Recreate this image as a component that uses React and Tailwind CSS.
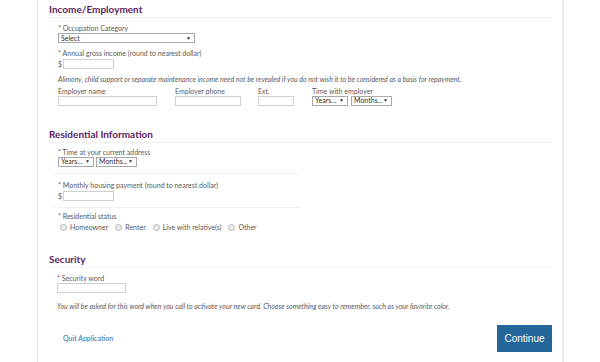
import React from "react"

const Label = ({ children, className = "" }) => (
  <p className={`text-[7px] leading-[9px] text-[#5a5a5a] ${className}`}>{children}</p>
)

const Box = ({ className = "" }) => (
  <div className={`h-[10px] border border-[#cfcfcf] bg-white ${className}`} />
)

const Dropdown = ({ text, className = "" }) => (
  <div className={`flex h-[10px] items-center justify-between border border-[#a9a9a9] bg-white pl-[2px] pr-[3px] text-[7px] leading-none text-[#333] ${className}`}>
    <span>{text}</span>
    <span className="text-[5px]">▼</span>
  </div>
)

const Radio = ({ text }) => (
  <div className="flex items-center gap-[3px]">
    <span className="h-[7px] w-[7px] rounded-full border border-[#b8b8b8] bg-[#ececec]" />
    <span className="text-[7px] text-[#5a5a5a]">{text}</span>
  </div>
)

const Heading = ({ children }) => (
  <div className="border-b border-[#f1f1f1] pb-[2px]">
    <h2 className="text-[10px] font-bold leading-[12px] text-[#5a1e5f]">{children}</h2>
  </div>
)

export default function App() {
  return (
    <div className="h-[362px] w-[600px] overflow-hidden bg-white font-['Lato','Open_Sans',sans-serif]">
      <div className="ml-[37px] h-full w-[527px] border-l border-r-2 border-l-[#e4e4e4] border-r-[#eeeeee] pl-[11px] pr-[10px] pt-[3px]">
        <Heading>Income/Employment</Heading>

        <div className="pl-[9px]">
          <Label className="mt-[6px]">* Occupation Category</Label>
          <Dropdown text="Select" className="w-[137px]" />

          <Label className="mt-[6px]">* Annual gross income (round to nearest dollar)</Label>
          <div className="mt-[1px] flex items-center gap-[1px]">
            <span className="text-[7px] text-[#5a5a5a]">$</span>
            <Box className="w-[51px]" />
          </div>

          <p className="mt-[5px] text-[7px] italic leading-[9px] text-[#5a5a5a]">
            Alimony, child support or separate maintenance income need not be revealed if you do not wish it to be considered as a basis for repayment.
          </p>

          <div className="mt-[3px] flex">
            <div className="w-[117px]">
              <Label>Employer name</Label>
              <Box className="w-[99px]" />
            </div>
            <div className="w-[83px]">
              <Label>Employer phone</Label>
              <Box className="w-[66px]" />
            </div>
            <div className="w-[54px]">
              <Label>Ext.</Label>
              <Box className="w-[36px]" />
            </div>
            <div>
              <Label>Time with employer</Label>
              <div className="flex gap-[3px]">
                <Dropdown text="Years..." className="w-[36px]" />
                <Dropdown text="Months..." className="w-[41px]" />
              </div>
            </div>
          </div>
        </div>

        <div className="mt-[22px]">
          <Heading>Residential Information</Heading>
        </div>

        <div className="w-[252px] pl-[9px]">
          <Label className="mt-[5px]">* Time at your current address</Label>
          <div className="flex gap-[2px]">
            <Dropdown text="Years..." className="w-[36px]" />
            <Dropdown text="Months..." className="w-[41px]" />
          </div>
        </div>
        <div className="ml-[3px] mt-[6px] w-[249px] border-b border-[#f1f1f1]" />

        <div className="pl-[9px]">
          <Label className="mt-[7px]">* Monthly housing payment (round to nearest dollar)</Label>
          <div className="mt-[1px] flex items-center gap-[1px]">
            <span className="text-[7px] text-[#5a5a5a]">$</span>
            <Box className="w-[51px]" />
          </div>
        </div>
        <div className="ml-[3px] mt-[6px] w-[249px] border-b border-[#f1f1f1]" />

        <div className="pl-[9px]">
          <Label className="mt-[4px]">* Residential status</Label>
          <div className="ml-[2px] mt-[1px] flex gap-[7px]">
            <Radio text="Homeowner" />
            <Radio text="Renter" />
            <Radio text="Live with relative(s)" />
            <Radio text="Other" />
          </div>
        </div>

        <div className="mt-[20px]">
          <Heading>Security</Heading>
        </div>

        <div className="pl-[8px]">
          <Label className="mt-[6px]">* Security word</Label>
          <Box className="w-[69px]" />
          <p className="mt-[9px] text-[7px] italic leading-[9px] text-[#5a5a5a]">
            You will be asked for this word when you call to activate your new card. Choose something easy to remember, such as your favorite color.
          </p>
        </div>

        <div className="mt-[14px] flex items-center justify-between">
          <a className="ml-[14px] mt-[1px] text-[7px] text-[#2e6da4]">Quit Application</a>
          <button className="h-[27px] w-[55px] bg-[#23679a] font-['Liberation_Sans',sans-serif] text-[10px] text-white">
            Continue
          </button>
        </div>
      </div>
    </div>
  )
}
